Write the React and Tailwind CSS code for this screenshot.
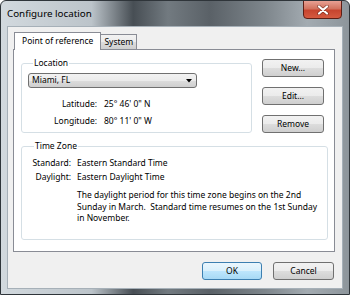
import React from "react";

const font = { fontFamily: '"Noto Sans", "Open Sans", sans-serif' };

function WinButton({ children, primary, className = "" }) {
  return (
    <div
      className={
        "flex items-center justify-center rounded-[3px] border text-[8.5px] leading-none text-black " +
        (primary
          ? "border-[#3c7fb1] bg-[linear-gradient(#eaf6fd_0%,#d9f0fc_50%,#bee6fd_50%,#a7d9f5_100%)] "
          : "border-[#707070] bg-[linear-gradient(#f2f2f2_0%,#ebebeb_50%,#dddddd_50%,#cfcfcf_100%)] ") +
        className
      }
    >
      {children}
    </div>
  );
}

export default function App() {
  return (
    <div
      style={font}
      className="w-[350px] h-[295px] flex flex-col rounded-t-[6px] border border-[#2f353a] bg-[linear-gradient(90deg,#d2d9de_0%,#bcc4ca_26%,#474e54_38%,#727a80_48%,#5a6167_60%,#7e868c_76%,#a3abb1_88%,#8d959b_100%)] px-[6px] pb-[5px] overflow-hidden"
    >
      {/* title bar */}
      <div className="h-[25px] flex items-start justify-between shrink-0">
        <div className="pt-[6px] text-[9.8px] leading-[13px] text-black">Configure location</div>
        <div className="mr-[1px] -mt-[1px] w-[39px] h-[19px] flex items-center justify-center rounded-b-[4px] border border-[#5d1f16] bg-[linear-gradient(#e8a194_0%,#d2735f_45%,#c7452f_55%,#d55a40_100%)]">
          <svg width="12" height="10" viewBox="0 0 12 10">
            <path d="M2 1.5L10 8.5M10 1.5L2 8.5" stroke="#4a1208" strokeWidth="3.6" strokeLinecap="round" opacity="0.55" />
            <path d="M2 1.5L10 8.5M10 1.5L2 8.5" stroke="#fff" strokeWidth="2.2" strokeLinecap="round" />
          </svg>
        </div>
      </div>

      {/* client */}
      <div className="flex-1 flex flex-col bg-[#f0f0f0] border border-[#a6b0b8] pl-[5px] pr-[7px]">
        {/* tabs */}
        <div className="flex items-start mt-[5px] h-[17px] relative z-10">
          <div className="ml-[1px] h-[18px] px-[7px] flex items-center bg-white border border-b-0 border-[#898c95] text-[8.5px] leading-none text-black">
            Point of reference
          </div>
          <div className="mt-[2px] h-[15px] px-[3px] flex items-center border border-l-0 border-b-0 border-[#898c95] bg-[linear-gradient(#f2f2f2_0%,#ebebeb_50%,#dddddd_50%,#cfcfcf_100%)] text-[8.5px] leading-none text-black">
            System
          </div>
        </div>

        {/* panel */}
        <div className="h-[203px] border border-[#898c95] bg-white flex flex-col pl-[7px] pt-[7px]">
          <div className="flex items-start">
            <fieldset className="w-[231px] h-[76px] border border-[#d5dfe5] rounded-[3px] pl-[6px]">
              <legend className="ml-[5px] px-[1px] text-[8.5px] leading-[12px] text-black">Location</legend>
              <div className="mt-[4px] w-[169px] h-[15px] flex items-center justify-between rounded-[3px] border border-[#707070] bg-[linear-gradient(#f2f2f2_0%,#ebebeb_50%,#dddddd_50%,#cfcfcf_100%)] pl-[3px] pr-[4px]">
                <span className="text-[8.5px] leading-none text-black">Miami, FL</span>
                <svg width="6" height="4" viewBox="0 0 6 4">
                  <path d="M0 0h6L3 3.5z" fill="#000" />
                </svg>
              </div>
              <div className="mt-[9px] flex flex-col gap-[3px] text-[8.5px] leading-[14px] text-black">
                <div className="flex gap-[7px]">
                  <span className="w-[69px] text-right">Latitude:</span>
                  <span>25° 46' 0" N</span>
                </div>
                <div className="flex gap-[7px]">
                  <span className="w-[69px] text-right">Longitude:</span>
                  <span>80° 11' 0" W</span>
                </div>
              </div>
            </fieldset>
            <div className="ml-[10px] mt-[2px] flex flex-col gap-[10px]">
              <WinButton className="w-[62px] h-[18px]">New...</WinButton>
              <WinButton className="w-[62px] h-[18px]">Edit...</WinButton>
              <WinButton className="w-[62px] h-[18px]">Remove</WinButton>
            </div>
          </div>

          <fieldset className="mt-[7px] w-[307px] h-[100px] border border-[#d5dfe5] rounded-[3px] pl-[6px]">
            <legend className="ml-[6px] px-[1px] text-[8.5px] leading-[12px] text-black">Time Zone</legend>
            <div className="mt-[4px] text-[8.5px] leading-[14px] text-black">
              <div className="flex gap-[6px]">
                <span className="w-[43px] text-right">Standard:</span>
                <span>Eastern Standard Time</span>
              </div>
              <div className="flex gap-[6px]">
                <span className="w-[43px] text-right">Daylight:</span>
                <span>Eastern Daylight Time</span>
              </div>
              <p className="mt-[5px] ml-[49px] leading-[11.5px] whitespace-nowrap">
                The daylight period for this time zone begins on the 2nd
                <br />
                Sunday in March.&nbsp; Standard time resumes on the 1st Sunday
                <br />
                in November.
              </p>
            </div>
          </fieldset>
        </div>

        {/* bottom buttons */}
        <div className="mt-[10px] flex justify-end gap-[11px] pr-[1px]">
          <WinButton primary className="w-[60px] h-[18px]">OK</WinButton>
          <WinButton className="w-[61px] h-[18px]">Cancel</WinButton>
        </div>
      </div>
    </div>
  );
}
